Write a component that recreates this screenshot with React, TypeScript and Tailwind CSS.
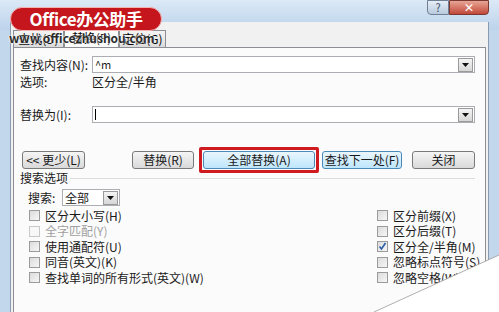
import React from 'react';

const font = { fontFamily: '"Noto Sans CJK SC", "Noto Sans", sans-serif' };

const Arrow: React.FC = () => (
  <div className="w-[15px] h-[14px] border border-[#9a9a9a] bg-gradient-to-b from-[#f4f4f4] to-[#d6d6d6] flex items-center justify-center">
    <svg width="7" height="4" viewBox="0 0 7 4">
      <path d="M0 0h7L3.5 4z" fill="#111" />
    </svg>
  </div>
);

const Check: React.FC<{ label: string; checked?: boolean; disabled?: boolean }> = ({ label, checked, disabled }) => (
  <div className="flex items-center h-[15.5px] gap-[5px] whitespace-nowrap">
    <div
      className={`w-[11px] h-[11px] shrink-0 border ${disabled ? 'border-[#c8c8c8] bg-[#f8f8f8]' : 'border-[#9b9b9b] bg-gradient-to-br from-[#dcdcdc] to-[#f6f6f6]'} flex items-center justify-center`}
    >
      {checked && (
        <svg width="9" height="9" viewBox="0 0 9 9">
          <path d="M1.5 4.5l2 2.5 4-6" stroke="#2a5fa8" strokeWidth="1.6" fill="none" />
        </svg>
      )}
    </div>
    <span className={`text-[12px] leading-none ${disabled ? 'text-[#a0a0a0]' : 'text-[#1a1a1a]'}`}>{label}</span>
  </div>
);

const Btn: React.FC<{ children: React.ReactNode; w: string; blue?: boolean }> = ({ children, w, blue }) => (
  <div
    className={`${w} h-[18px] rounded-[3px] border flex items-center justify-center text-[12px] text-[#1a1a1a] whitespace-nowrap ${
      blue
        ? 'border-[#4a8ab8] bg-gradient-to-b from-[#eaf6fd] to-[#bee6fd]'
        : 'border-[#7a7a7a] bg-gradient-to-b from-[#f5f5f5] to-[#d9d9d9]'
    }`}
  >
    {children}
  </div>
);

const App: React.FC = () => {
  return (
    <div className="relative w-[499px] h-[312px] overflow-hidden bg-[#c3d7ec]" style={font}>
      {/* Title bar */}
      <div className="h-[30px] bg-gradient-to-b from-[#dce9f6] to-[#bcd3eb] flex items-start justify-end">
        <div className="flex mr-[10px]">
          <div className="w-[22px] h-[15px] border border-[#6f7f94] rounded-bl-[4px] bg-gradient-to-b from-[#e6eef7] to-[#b9cadd] flex items-center justify-center text-[11px] text-[#3a4a66] leading-none">
            ?
          </div>
          <div className="w-[40px] h-[15px] border border-[#7a3830] rounded-br-[4px] bg-gradient-to-b from-[#e7a595] to-[#c0473a] flex items-center justify-center text-[11px] font-bold text-white leading-none">
            ×
          </div>
        </div>
      </div>

      {/* Window body */}
      <div className="absolute left-[10px] right-[10px] top-[22px] bottom-0 bg-[#f1f1f1] border-l border-r border-[#8a9bb0]">
        {/* Tabs */}
        <div className="relative h-[25px] flex items-end pl-[2px]">
          <div className="h-[17px] w-[51px] border border-[#8c8e94] border-b-0 bg-gradient-to-b from-[#f3f3f3] to-[#dcdcdc] text-[12px] flex items-center justify-center">
            查找(D)
          </div>
          <div className="h-[19px] w-[55px] border border-[#8c8e94] border-b-0 bg-[#fbfbfb] text-[12px] flex items-center justify-center">
            替换(P)
          </div>
          <div className="h-[17px] w-[47px] border border-[#8c8e94] border-b-0 bg-gradient-to-b from-[#f3f3f3] to-[#dcdcdc] text-[12px] flex items-center justify-center">
            定位(G)
          </div>
          <div
            className="absolute left-[-2px] top-[10px] text-[12px] font-bold text-[#2b2b2b] leading-none"
            style={{ textShadow: '0 0 2px #fff, 0 0 2px #fff' }}
          >
            www.officezhushou.com
          </div>
        </div>

        {/* Tab panel */}
        <div className="ml-[2px] mr-[2px] h-[300px] border border-[#8c8e94] bg-[#fbfbfb] pl-[6px] pr-[10px] pt-[8px] text-[12px] text-[#1a1a1a]">
          <div className="flex items-center h-[17px]">
            <span className="w-[72px]">查找内容(N):</span>
            <div className="flex-1 h-[17px] border border-[#abadb3] bg-white flex items-center justify-between pl-[2px] pr-[1px]">
              <span className="text-[11px] leading-none">^m</span>
              <Arrow />
            </div>
          </div>
          <div className="flex items-center h-[15px] mt-[1px]">
            <span className="w-[72px]">选项:</span>
            <span>区分全/半角</span>
          </div>
          <div className="flex items-center h-[17px] mt-[17px]">
            <span className="w-[72px]">替换为(I):</span>
            <div className="flex-1 h-[17px] border border-[#abadb3] bg-white flex items-center justify-between pl-[2px] pr-[1px]">
              <span className="w-px h-[11px] bg-black" />
              <Arrow />
            </div>
          </div>

          {/* Buttons */}
          <div className="flex items-center h-[24px] mt-[25px] pl-[2px]">
            <Btn w="w-[64px]">&lt;&lt; 更少(L)</Btn>
            <div className="ml-[47px]">
              <Btn w="w-[62px]">替换(R)</Btn>
            </div>
            <div className="ml-[5px] border-[3px] border-[#cf1a20] rounded-[2px] p-[1px]">
              <Btn w="w-[112px]" blue>
                全部替换(A)
              </Btn>
            </div>
            <div className="ml-[3px]">
              <Btn w="w-[80px]" blue>
                查找下一处(F)
              </Btn>
            </div>
            <div className="ml-[10px]">
              <Btn w="w-[63px]">关闭</Btn>
            </div>
          </div>

          {/* Search options */}
          <div className="flex items-center h-[14px] -mt-[1px]">
            <span>搜索选项</span>
            <div className="flex-1 ml-[2px] h-px bg-[#dcdcdc]" />
          </div>
          <div className="flex items-center h-[17px] mt-[4px] pl-[8px]">
            <span className="w-[34px]">搜索:</span>
            <div className="w-[58px] h-[17px] border border-[#abadb3] bg-white flex items-center justify-between pl-[2px] pr-[1px]">
              <span>全部</span>
              <Arrow />
            </div>
          </div>
          <div className="flex justify-between mt-[2px] pl-[9px]">
            <div className="flex flex-col">
              <Check label="区分大小写(H)" />
              <Check label="全字匹配(Y)" disabled />
              <Check label="使用通配符(U)" />
              <Check label="同音(英文)(K)" />
              <Check label="查找单词的所有形式(英文)(W)" />
            </div>
            <div className="flex flex-col w-[100px] mr-[-2px]">
              <Check label="区分前缀(X)" />
              <Check label="区分后缀(T)" />
              <Check label="区分全/半角(M)" checked />
              <Check label="忽略标点符号(S)" />
              <Check label="忽略空格(W)" />
            </div>
          </div>
        </div>
      </div>

      {/* Logo badge over the title bar */}
      <div className="absolute left-[10px] top-[7px] w-[152px] h-[24px] rounded-full bg-[#c4161c] border border-[#f3b3b3] flex items-center justify-center text-white text-[17px] font-bold tracking-tight">
        Office办公助手
      </div>

      {/* Page curl */}
      <svg className="absolute left-0 top-0" width="499" height="312" viewBox="0 0 499 312">
        <path d="M374 312L499 255V312Z" fill="#ffffff" />
        <path d="M374 312L499 255" stroke="#9a9a9a" strokeWidth="0.8" fill="none" />
      </svg>
    </div>
  );
};

export default App;
